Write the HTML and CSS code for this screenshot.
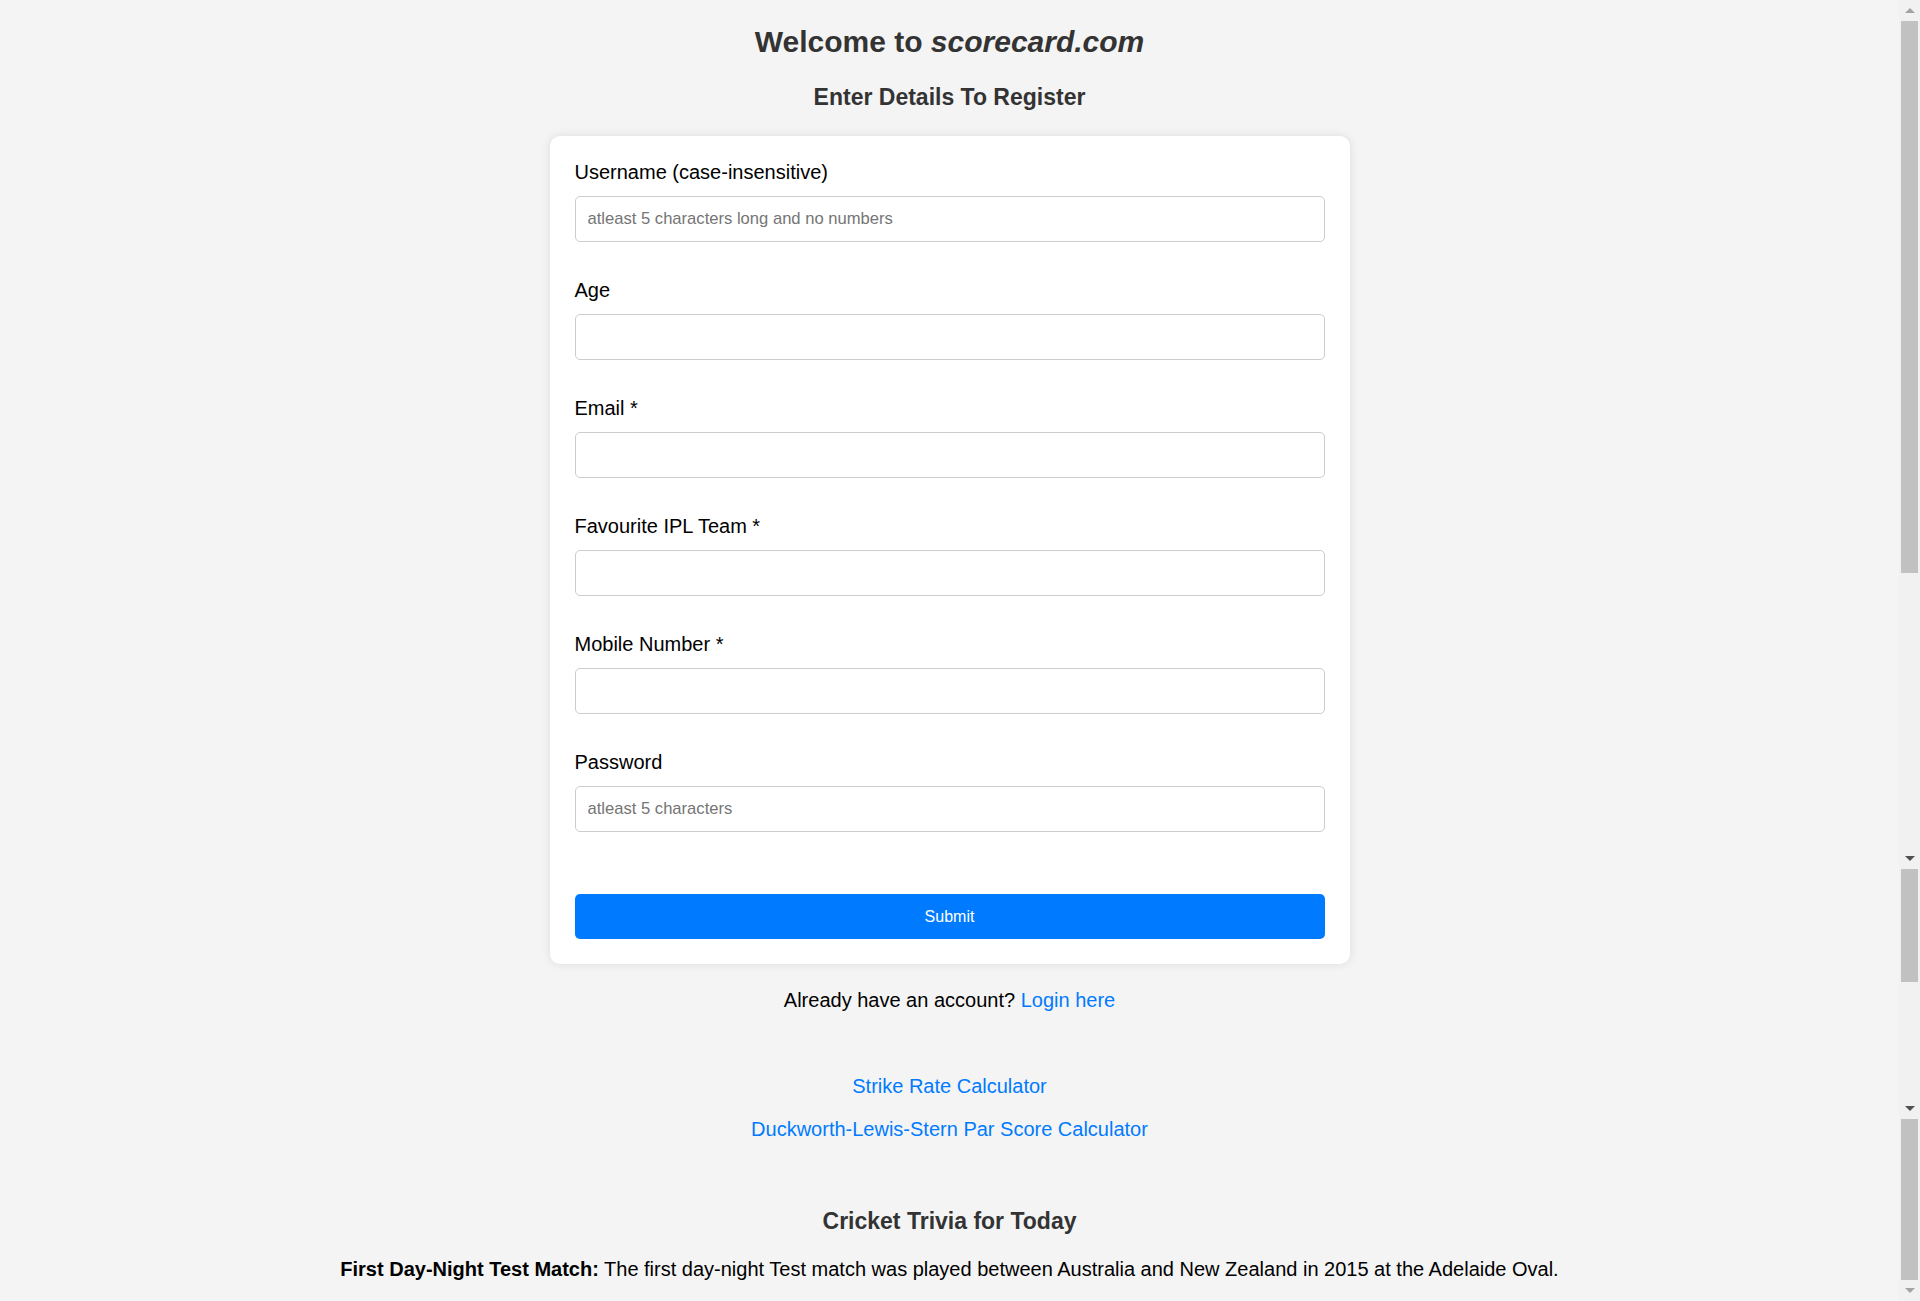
FILE: index.html
```html
<!DOCTYPE html>
<html lang="en">
<head>
<meta charset="utf-8">
<title>Register - scorecard.com</title>
<link rel="stylesheet" href="styles.css">
</head>
<body>
<div class="frame">
<main class="page">
  <h1 class="title">Welcome to <em>scorecard.com</em></h1>
  <h2 class="subtitle">Enter Details To Register</h2>
  <form class="card">
    <div class="group">
      <label class="label" for="username">Username (case-insensitive)</label>
      <input class="input" id="username" type="text" placeholder="atleast 5 characters long and no numbers">
    </div>
    <div class="group">
      <label class="label" for="age">Age</label>
      <input class="input" id="age" type="number">
    </div>
    <div class="group">
      <label class="label" for="email">Email *</label>
      <input class="input" id="email" type="email">
    </div>
    <div class="group">
      <label class="label" for="team">Favourite IPL Team *</label>
      <input class="input" id="team" type="text">
    </div>
    <div class="group">
      <label class="label" for="mobile">Mobile Number *</label>
      <input class="input" id="mobile" type="tel">
    </div>
    <div class="group">
      <label class="label" for="password">Password</label>
      <input class="input" id="password" type="password" placeholder="atleast 5 characters">
    </div>
    <button class="submit" type="button">Submit</button>
  </form>
  <p class="login">Already have an account? <a class="link" href="#">Login here</a></p>
  <nav class="tools">
    <a class="link" href="#">Strike Rate Calculator</a>
    <a class="link" href="#">Duckworth-Lewis-Stern Par Score Calculator</a>
  </nav>
  <h3 class="trivia-title">Cricket Trivia for Today</h3>
  <p class="trivia"><strong>First Day-Night Test Match:</strong> The first day-night Test match was played between Australia and New Zealand in 2015 at the Adelaide Oval.</p>
</main>
<div class="scrollbar" aria-hidden="true">
  <div class="sb-btn"><span class="arrow-up"></span></div>
  <div class="sb-thumb sb-thumb-1"></div>
  <div class="sb-track sb-track-1"></div>
  <div class="sb-btn"><span class="arrow-down"></span></div>
  <div class="sb-thumb sb-thumb-2"></div>
  <div class="sb-track sb-track-2"></div>
  <div class="sb-btn"><span class="arrow-down"></span></div>
  <div class="sb-thumb sb-thumb-3"></div>
  <div class="sb-btn"><span class="arrow-down arrow-light"></span></div>
</div>
</div>
</body>
</html>
```
FILE: styles.css
```css
html, body {
  margin: 0;
  padding: 0;
  height: 100%;
  overflow: hidden;
}
body {
  background: #f4f4f4;
  font-family: "Liberation Sans", Arial, sans-serif;
  color: #000;
}
.frame {
  display: flex;
  height: 100vh;
  overflow: hidden;
}
.page {
  flex: 1;
  min-width: 0;
  display: flex;
  flex-direction: column;
  align-items: center;
  padding: 24px 0 0;
}
.scrollbar {
  width: 21px;
  flex: none;
  background: #f1f1f1;
  display: flex;
  flex-direction: column;
}
.sb-btn {
  height: 21px;
  flex: none;
  display: flex;
  align-items: center;
  justify-content: center;
}
.arrow-up {
  width: 0;
  height: 0;
  border-left: 5px solid transparent;
  border-right: 5px solid transparent;
  border-bottom: 5px solid #a3a3a3;
}
.arrow-down {
  width: 0;
  height: 0;
  border-left: 5px solid transparent;
  border-right: 5px solid transparent;
  border-top: 5px solid #505050;
}
.arrow-light {
  border-top-color: #a3a3a3;
}
.sb-thumb {
  flex: none;
  margin: 0 2px;
  background: #c1c1c1;
}
.sb-thumb-1 { height: 552px; }
.sb-track-1 { height: 275px; flex: none; }
.sb-thumb-2 { height: 113px; }
.sb-track-2 { height: 116px; flex: none; }
.sb-thumb-3 { flex: 1; }
.title {
  margin: 0;
  font-size: 30px;
  line-height: 36px;
  font-weight: bold;
  color: #333;
}
.title em {
  font-style: italic;
}
.subtitle {
  margin: 24px 0 0;
  font-size: 23px;
  line-height: 27px;
  font-weight: bold;
  color: #333;
}
.card {
  margin-top: 25px;
  width: 800px;
  box-sizing: border-box;
  padding: 25px;
  background: #fff;
  border-radius: 10px;
  box-shadow: 0 0 10px rgba(0, 0, 0, 0.1);
  display: flex;
  flex-direction: column;
}
.group {
  display: flex;
  flex-direction: column;
  margin-bottom: 37px;
}
.label {
  font-size: 20px;
  line-height: 23px;
  margin-bottom: 12px;
  color: #000;
}
.input {
  height: 46px;
  box-sizing: border-box;
  border: 1px solid #ccc;
  border-radius: 5px;
  padding: 0 12px;
  font-family: "Liberation Sans", Arial, sans-serif;
  font-size: 16.6px;
  background: #fff;
  outline: none;
}
.input::placeholder {
  color: #757575;
}
.submit {
  margin-top: 25px;
  height: 45px;
  border: none;
  border-radius: 5px;
  background: #007bff;
  color: #fff;
  font-family: "Liberation Sans", Arial, sans-serif;
  font-size: 16px;
  cursor: pointer;
}
.login {
  margin: 25px 0 0;
  font-size: 20px;
  line-height: 23px;
}
.link {
  color: #007bff;
  text-decoration: none;
}
.tools {
  margin-top: 63px;
  display: flex;
  flex-direction: column;
  align-items: center;
  gap: 20px;
  font-size: 20px;
  line-height: 23px;
}
.trivia-title {
  margin: 67px 0 0;
  font-size: 23px;
  line-height: 27px;
  font-weight: bold;
  color: #333;
}
.trivia {
  margin: 23px 0 0;
  font-size: 20px;
  line-height: 23px;
}
```
